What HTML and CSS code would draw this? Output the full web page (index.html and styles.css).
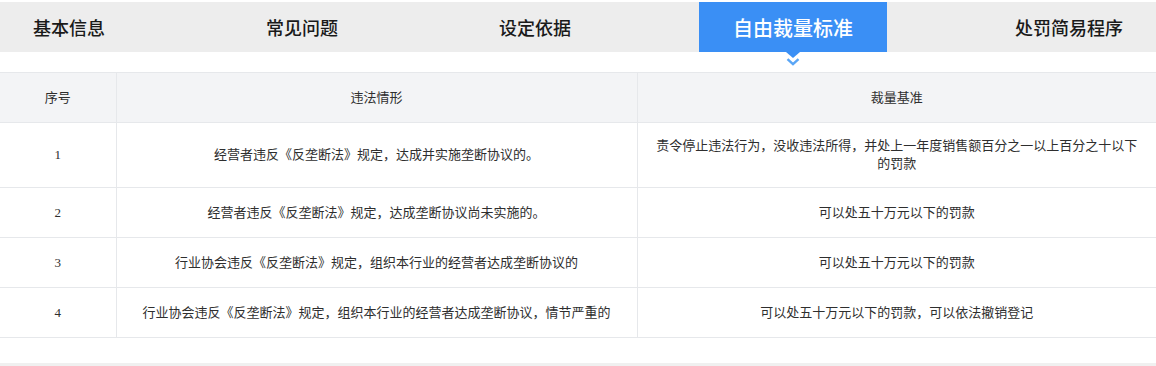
FILE: index.html
```html
<!DOCTYPE html>
<html lang="zh-CN">
<head>
<meta charset="utf-8">
<title>自由裁量标准</title>
<link rel="stylesheet" href="styles.css">
</head>
<body>
<nav class="tabs">
  <a class="tab">基本信息</a>
  <a class="tab">常见问题</a>
  <a class="tab">设定依据</a>
  <a class="tab active">自由裁量标准<span class="pointer"><span class="tri"></span><svg class="chev" width="14" height="8" viewBox="0 0 14 8"><path d="M1.5 1.2 L7 6.2 L12.5 1.2" fill="none" stroke="#5aa6f6" stroke-width="2.4"/></svg></span></a>
  <a class="tab">处罚简易程序</a>
</nav>
<section class="content">
  <table class="grid">
    <colgroup>
      <col class="c-no">
      <col class="c-case">
      <col class="c-rule">
    </colgroup>
    <thead>
      <tr><th>序号</th><th>违法情形</th><th>裁量基准</th></tr>
    </thead>
    <tbody>
      <tr class="tall"><td>1</td><td>经营者违反《反垄断法》规定，达成并实施垄断协议的。</td><td>责令停止违法行为，没收违法所得，并处上一年度销售额百分之一以上百分之十以下的罚款</td></tr>
      <tr><td>2</td><td>经营者违反《反垄断法》规定，达成垄断协议尚未实施的。</td><td>可以处五十万元以下的罚款</td></tr>
      <tr><td>3</td><td>行业协会违反《反垄断法》规定，组织本行业的经营者达成垄断协议的</td><td>可以处五十万元以下的罚款</td></tr>
      <tr><td>4</td><td>行业协会违反《反垄断法》规定，组织本行业的经营者达成垄断协议，情节严重的</td><td>可以处五十万元以下的罚款，可以依法撤销登记</td></tr>
    </tbody>
  </table>
</section>
<div class="footer-band"></div>
</body>
</html>
```

FILE: styles.css
```css
html, body {
  margin: 0;
  padding: 0;
  background: #ffffff;
}
body {
  font-family: "Liberation Serif", "Noto Sans CJK SC", serif;
  color: #333333;
}
.tabs {
  margin-top: 2px;
  height: 50px;
  background: #ededed;
  display: flex;
  justify-content: space-between;
  align-items: stretch;
}
.tab {
  position: relative;
  display: flex;
  align-items: center;
  padding: 0 33px;
  font-family: "Noto Sans CJK SC", sans-serif;
  font-size: 18px;
  font-weight: 500;
  color: #1a1a1a;
  white-space: nowrap;
}
.tab.active {
  padding: 0 34px;
  font-size: 20px;
  background: #3a8ff5;
  color: #ffffff;
}
.pointer {
  position: absolute;
  top: 100%;
  left: 50%;
  transform: translateX(-50%);
  display: flex;
  flex-direction: column;
  align-items: center;
}
.tri {
  width: 0;
  height: 0;
  border-top: 6px solid #3a8ff5;
  border-left: 7px solid transparent;
  border-right: 7px solid transparent;
}
.chev {
  display: block;
}
.content {
  margin-top: 20px;
}
.grid {
  width: 100%;
  border-collapse: collapse;
  table-layout: fixed;
  font-size: 13px;
  line-height: 18px;
}
.c-no { width: 116px; }
.c-case { width: 521px; }
.grid th,
.grid td {
  border: 1px solid #e6e8eb;
  text-align: center;
  vertical-align: middle;
  padding: 15px 16px;
  font-weight: 400;
  color: #2e2e2e;
}
.grid th:first-child,
.grid td:first-child { border-left: none; }
.grid th:last-child,
.grid td:last-child { border-right: none; }
.grid th {
  background: #f3f4f6;
  height: 19px;
}
.grid td {
  height: 19px;
}
.grid tr.tall td {
  padding-top: 14px;
  padding-bottom: 14px;
}
.footer-band {
  margin-top: 25px;
  height: 8px;
  background: #f0f0f0;
}
```
